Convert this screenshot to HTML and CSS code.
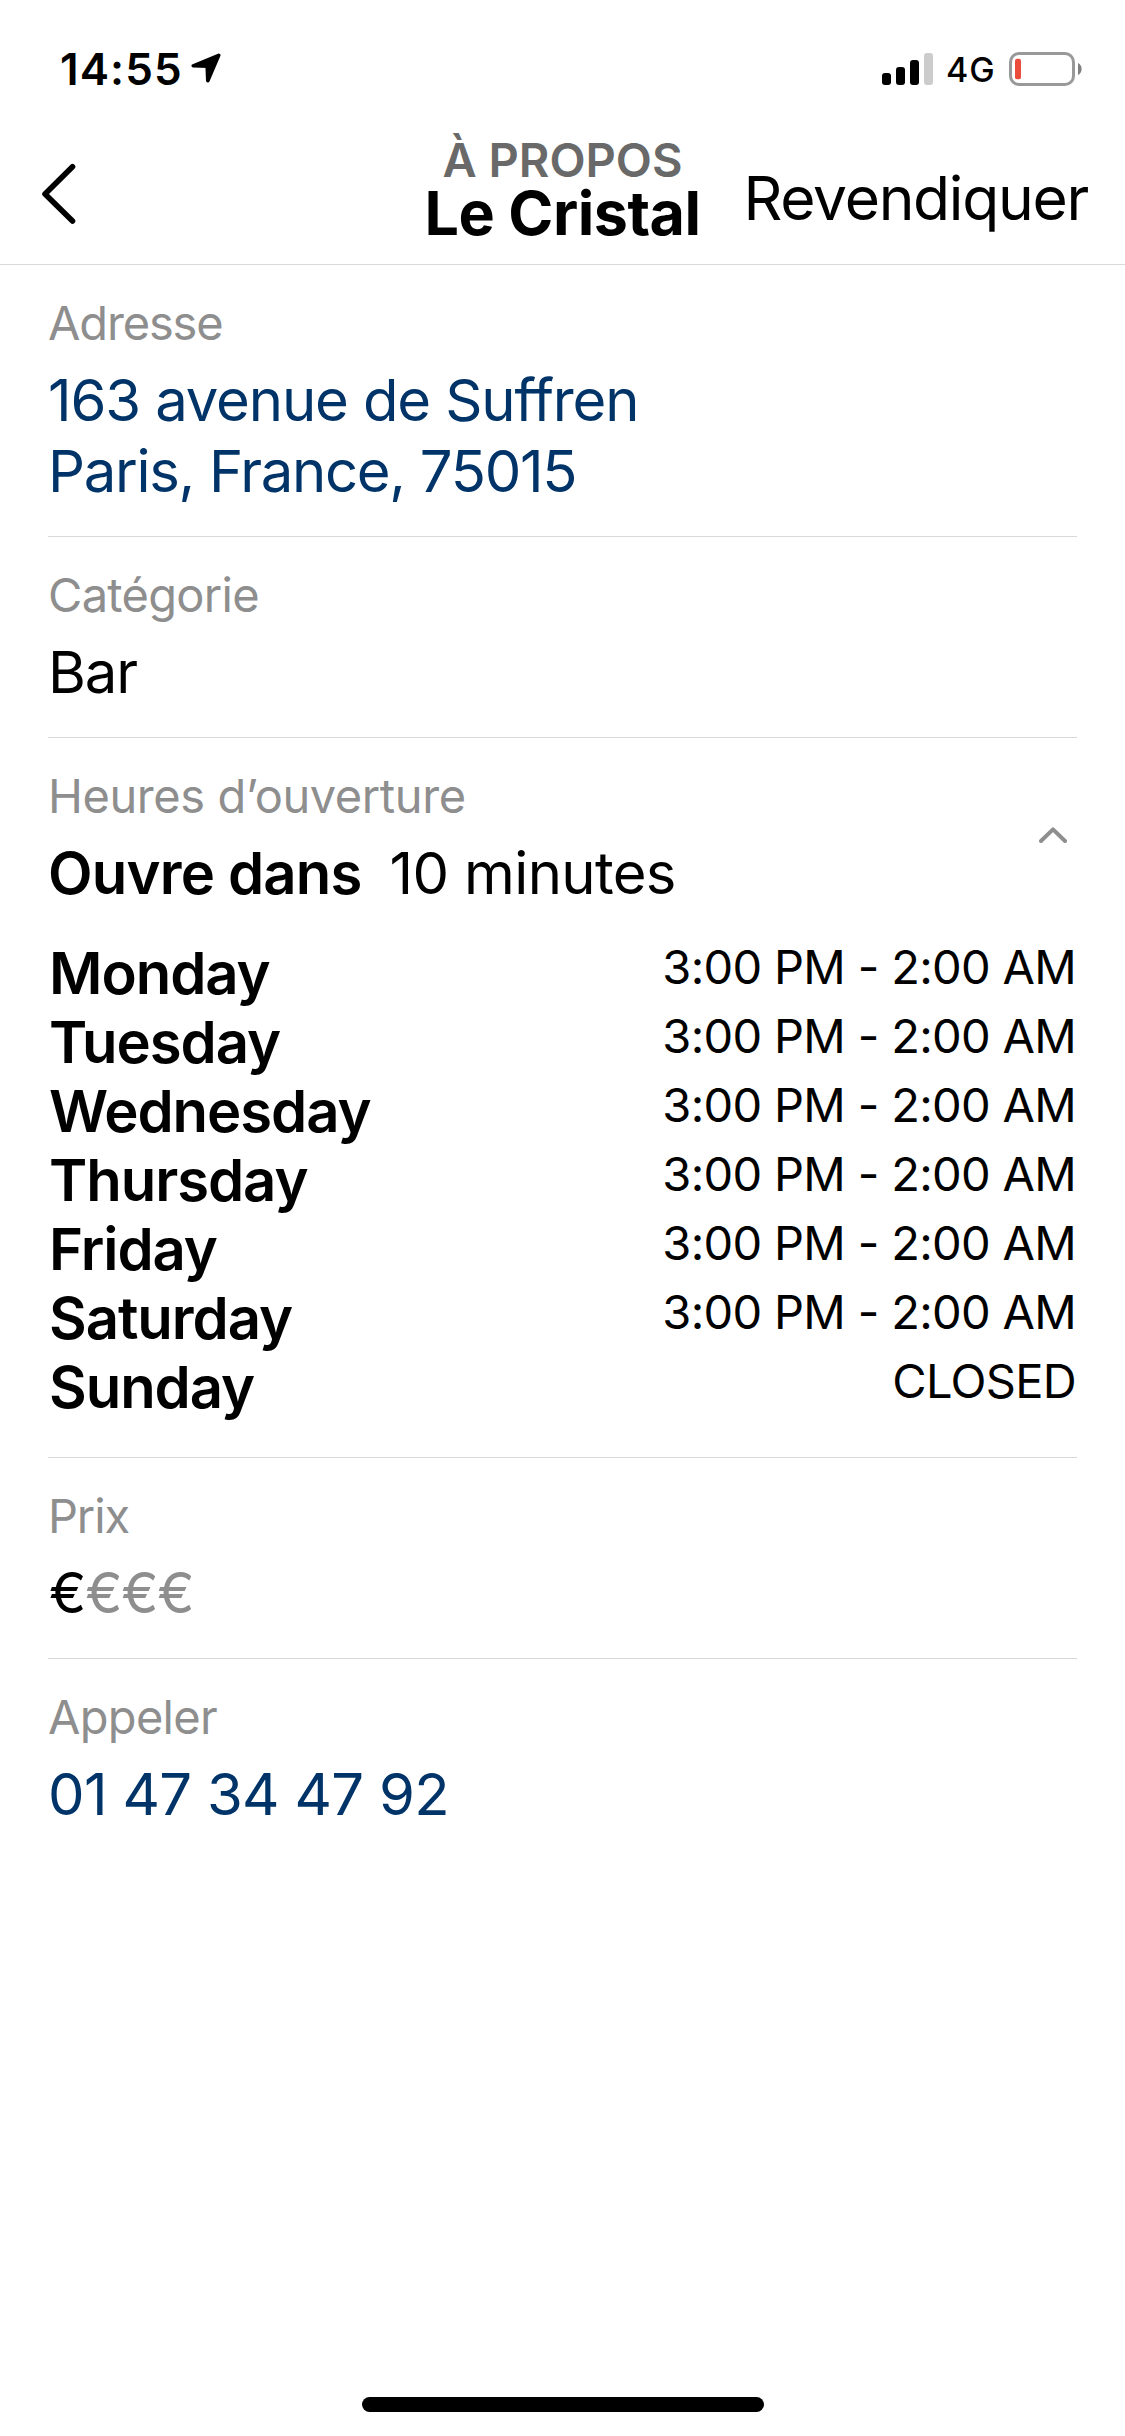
FILE: index.html
```html
<!DOCTYPE html>
<html lang="fr">
<head>
    <meta charset="UTF-8">
    <meta name="viewport" content="width=device-width, initial-scale=1.0">
    <title>À propos - Le Cristal</title>
    <link rel="stylesheet" href="styles.css">
</head>
<body>
    <div class="status-bar">
        <div class="status-left">
            <span class="time">14:55</span>
            <svg class="location-icon" width="30" height="30" viewBox="0 0 30 30">
                <path d="M27.7 2.3 L2.3 12.8 L16.2 13.2 L16.8 27.7 Z" fill="#000" stroke="#000" stroke-width="3.6" stroke-linejoin="round"/>
            </svg>
        </div>
        <div class="status-right">
            <svg class="signal-icon" width="51" height="32" viewBox="0 0 51 32">
                <rect x="0" y="20" width="9" height="12" rx="3"/>
                <rect x="14" y="14" width="9" height="18" rx="3"/>
                <rect x="28" y="7" width="9" height="25" rx="3"/>
                <rect x="42" y="0" width="9" height="32" rx="3" fill="#ccc"/>
            </svg>
            <span class="network">4G</span>
            <svg class="battery-icon" width="73" height="34" viewBox="0 0 73 34">
                <rect x="1.5" y="1.5" width="63" height="31" rx="8.5" fill="none" stroke="#999" stroke-width="3"/>
                <rect x="6" y="6.7" width="6" height="20.6" rx="2" fill="#eb4d3d"/>
                <path d="M69 11 A6.8 6.8 0 0 1 69 23 Z" fill="#808080"/>
            </svg>
        </div>
    </div>

    <header class="nav">
        <a class="back" href="#" aria-label="Retour">
            <svg width="34" height="68" viewBox="0 0 34 68">
                <path d="M30.5 6.7 L3 34 L30.5 61" fill="none" stroke="#000" stroke-width="5.6" stroke-linecap="round" stroke-linejoin="round"/>
            </svg>
        </a>
        <div class="title">
            <div class="title-top">À PROPOS</div>
            <h1 class="title-name">Le Cristal</h1>
        </div>
        <a class="claim" href="#">Revendiquer</a>
    </header>

    <main class="content">
        <section class="section">
            <div class="label tight">Adresse</div>
            <div class="value link address">163 avenue de Suffren<br><span class="city">Paris, France, 75015</span></div>
        </section>

        <section class="section">
            <div class="label">Catégorie</div>
            <div class="value">Bar</div>
        </section>

        <section class="section hours">
            <div class="hours-header">
                <div>
                    <div class="label loose">Heures d’ouverture</div>
                    <div class="value opening"><strong>Ouvre dans</strong><span>10 minutes</span></div>
                </div>
                <svg class="chevron" width="28" height="16" viewBox="0 0 28 16">
                    <path d="M2 14 L14 2.4 L26 14" fill="none" stroke="#8e8e8e" stroke-width="4" stroke-linecap="round" stroke-linejoin="round"/>
                </svg>
            </div>
            <div class="days">
                <div class="day"><span class="day-name">Monday</span><span class="day-time">3:00 PM - 2:00 AM</span></div>
                <div class="day"><span class="day-name">Tuesday</span><span class="day-time">3:00 PM - 2:00 AM</span></div>
                <div class="day"><span class="day-name">Wednesday</span><span class="day-time">3:00 PM - 2:00 AM</span></div>
                <div class="day"><span class="day-name">Thursday</span><span class="day-time">3:00 PM - 2:00 AM</span></div>
                <div class="day"><span class="day-name">Friday</span><span class="day-time">3:00 PM - 2:00 AM</span></div>
                <div class="day"><span class="day-name">Saturday</span><span class="day-time">3:00 PM - 2:00 AM</span></div>
                <div class="day"><span class="day-name">Sunday</span><span class="day-time">CLOSED</span></div>
            </div>
        </section>

        <section class="section">
            <div class="label tight">Prix</div>
            <div class="value price">€<span class="price-off">€€€</span></div>
        </section>

        <section class="section">
            <div class="label">Appeler</div>
            <div class="value link phone">01 47 34 47 92</div>
        </section>
    </main>

    <div class="home-indicator"></div>
</body>
</html>
```
FILE: styles.css
```css
* {
    box-sizing: border-box;
}

body {
    margin: 0;
    height: 2436px;
    display: flex;
    flex-direction: column;
    background-color: #fff;
    color: #000;
    font-family: Inter, "Liberation Sans", sans-serif;
}

a {
    color: inherit;
    text-decoration: none;
}

/* Status bar */
.status-bar {
    display: flex;
    justify-content: space-between;
    align-items: flex-start;
    height: 110px;
    padding: 43px 43px 0 60px;
}

.status-left,
.status-right {
    display: flex;
    align-items: flex-start;
}

.time {
    font-size: 44px;
    font-weight: 600;
    line-height: 52px;
    letter-spacing: 1.1px;
}

.location-icon {
    margin-top: 10px;
    margin-left: 8px;
}

.signal-icon {
    margin-top: 10px;
}

.network {
    margin-top: 7px;
    margin-left: 13px;
    margin-right: 13px;
    width: 50px;
    font-size: 34px;
    font-weight: 500;
    line-height: 40px;
    letter-spacing: 1px;
}

.battery-icon {
    margin-top: 9px;
}

/* Navigation */
.nav {
    display: grid;
    grid-template-columns: 1fr auto 1fr;
    align-items: start;
    height: 155px;
    border-bottom: 1px solid #d9d9d9;
}

.back {
    padding: 50px 0 0 42px;
}

.back svg {
    display: block;
}

.title {
    padding-top: 21px;
    text-align: center;
}

.title-top {
    font-size: 47px;
    font-weight: 600;
    line-height: 57px;
    color: #696969;
}

.title-name {
    margin: 0;
    font-size: 61px;
    font-weight: 700;
    line-height: 50px;
    letter-spacing: -0.5px;
}

.claim {
    padding: 52px 37px 0 0;
    text-align: right;
    font-size: 60.5px;
    line-height: 72px;
    letter-spacing: -1.28px;
}

/* Sections */
.content {
    flex: 1;
    padding: 0 48px;
}

.section {
    padding: 30px 0 29px;
    border-bottom: 1px solid #d9d9d9;
}

.section:last-child {
    border-bottom: none;
}

.label {
    margin-bottom: 14px;
    font-size: 47px;
    line-height: 56px;
    letter-spacing: -0.7px;
    color: #8e8e8e;
}

.label.tight {
    letter-spacing: -1.15px;
}

.label.loose {
    letter-spacing: -0.43px;
}

.value {
    font-size: 58px;
    line-height: 71px;
    letter-spacing: -1.13px;
}

.link {
    color: #003468;
}

.city {
    letter-spacing: -1.3px;
}

.phone {
    letter-spacing: -0.7px;
}

/* Opening hours */
.hours {
    padding-bottom: 35px;
}

.hours-header {
    display: flex;
    justify-content: space-between;
    align-items: flex-start;
}

.opening {
    display: flex;
    gap: 28px;
    letter-spacing: -0.65px;
}

.opening strong {
    font-weight: 600;
    letter-spacing: -0.81px;
}

.chevron {
    margin-top: 59px;
    margin-right: 10px;
}

.days {
    margin-top: 30px;
    padding: 0 1px;
}

.day {
    display: flex;
    justify-content: space-between;
    align-items: flex-start;
    height: 69px;
}

.day-name {
    font-size: 58px;
    font-weight: 600;
    line-height: 69px;
    letter-spacing: -1.05px;
}

.day-time {
    font-size: 47px;
    line-height: 55px;
    letter-spacing: -0.68px;
}

/* Price */
.price {
    padding-left: 1px;
    font-size: 56px;
    line-height: 70px;
    margin-bottom: 1px;
    letter-spacing: -1.2px;
}

.price-off {
    color: #8e8e8e;
}

.home-indicator {
    align-self: center;
    width: 402px;
    height: 15px;
    margin-bottom: 24px;
    border-radius: 8px;
    background-color: #000;
}
```
